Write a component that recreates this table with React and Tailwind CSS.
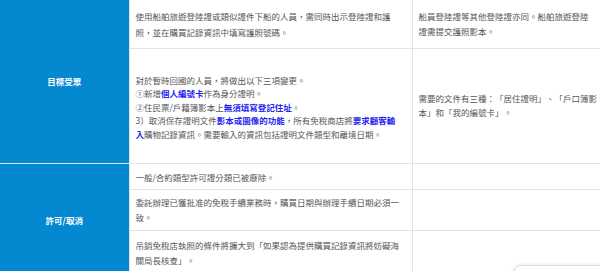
const font = { fontFamily: '"Noto Sans CJK TC", "Noto Sans", sans-serif' };

const B = ({ children }) => <strong className="font-bold text-[#2424f0]">{children}</strong>;

export default function App() {
  return (
    <div className="relative h-[271px] w-[600px] overflow-hidden bg-white [text-spacing-trim:space-all]" style={font}>
      <table className="w-[600px] table-fixed border-collapse text-[8.5px] text-[#555]">
        <colgroup>
          <col className="w-[129px]" />
          <col className="w-[283px]" />
          <col className="w-[188px]" />
        </colgroup>
        <tbody>
          <tr className="h-[48px]">
            <td rowSpan={2} className="border-b border-r border-[#e4e4e4] bg-[#0488d0] text-center font-bold text-white">
              目標受眾
            </td>
            <td className="border border-l-0 border-t-0 border-[#e4e4e4] pl-[6px] pr-[8px] align-middle leading-[16px]">
              使用船舶旅遊登陸證或類似證件下船的人員，需同時出示登陸證和護照，並在購買記錄資訊中填寫護照號碼。
            </td>
            <td className="border border-t-0 border-[#e4e4e4] pl-[6px] pr-[8px] align-middle leading-[15px]">
              船員登陸證等其他登陸證亦同。船舶旅遊登陸證需提交護照影本。
            </td>
          </tr>
          <tr className="h-[115px]">
            <td className="border border-l-0 border-[#e4e4e4] pl-[6px] pr-[8px] pt-[4px] align-middle leading-[13.4px]">
              對於暫時回國的人員，將做出以下三項變更。
              <br />
              ①新增<B>個人編號卡</B>作為身分證明。
              <br />
              ②住民票/戶籍簿影本上<B>無須填寫登記住址</B>。
              <br />
              3）取消保存證明文件<B>影本或圖像的功能</B>，所有免稅商店將<B>要求顧客輸入</B>購物記錄資訊。需要輸入的資訊包括證明文件類型和離境日期。
            </td>
            <td className="border border-[#e4e4e4] pl-[6px] pr-[1px] align-middle leading-[13.4px]">
              需要的文件有三種：「居住證明」、「戶口簿影本」和「我的編號卡」。
            </td>
          </tr>
          <tr className="h-[26px]">
            <td rowSpan={3} className="border-r border-t border-[#e4e4e4] bg-[#0488d0] pt-[2px] text-center font-bold text-white">
              許可/取消
            </td>
            <td className="border border-l-0 border-[#e4e4e4] pl-[6px] pr-[8px] pt-[3px] align-middle leading-[15px]">
              一般/合約類型許可證分類已被廢除。
            </td>
            <td className="border border-[#e4e4e4]" />
          </tr>
          <tr className="h-[41px]">
            <td className="border border-l-0 border-[#e4e4e4] pl-[6px] pr-[8px] align-middle leading-[15px]">
              委託辦理已獲批准的免稅手續業務時，購買日期與辦理手續日期必須一致。
            </td>
            <td className="border border-[#e4e4e4]" />
          </tr>
          <tr className="h-[45px]">
            <td className="border border-l-0 border-[#e4e4e4] pl-[6px] pr-[8px] align-middle leading-[15px]">
              吊銷免稅店執照的條件將擴大到「如果認為提供購買記錄資訊將妨礙海關局長核查」。
            </td>
            <td className="border border-[#e4e4e4]" />
          </tr>
        </tbody>
      </table>
      <div className="absolute left-[513px] top-[265px] h-[40px] w-[100px] rounded-tl-[8px] border border-[#dcdcdc] bg-white shadow-[0_-1px_3px_rgba(0,0,0,0.08)]" />
    </div>
  );
}
